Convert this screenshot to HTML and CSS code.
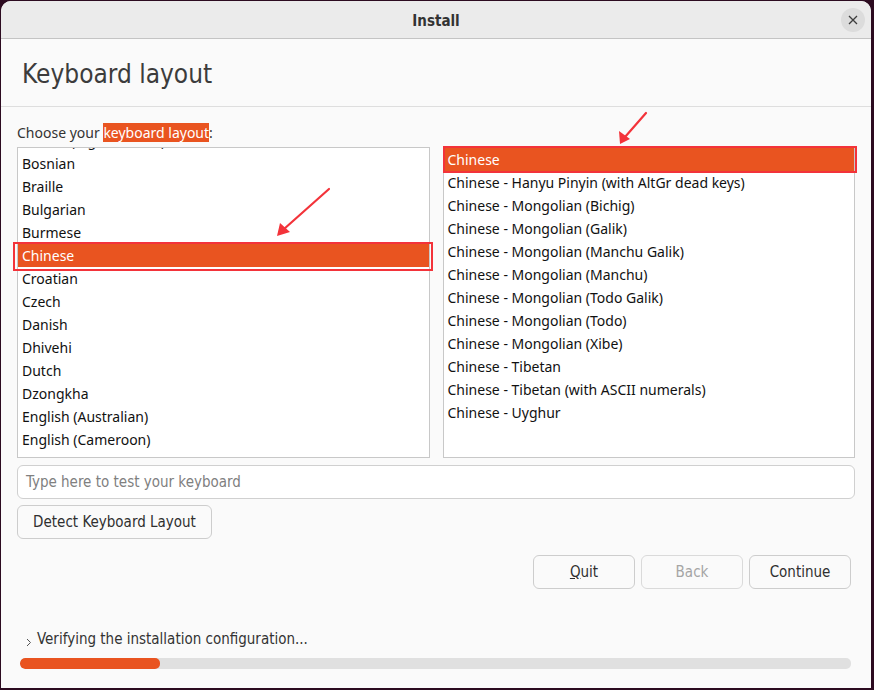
FILE: index.html
```html
<!DOCTYPE html>
<html>
<head>
<meta charset="utf-8">
<link rel="stylesheet" href="styles.css">
</head>
<body>
<div class="window">
  <header class="titlebar">
    <span class="title">Install</span>
    <span class="close">
      <svg width="10" height="10" viewBox="0 0 10 10"><path d="M1 1 L9 9 M9 1 L1 9" stroke="#3d3d3d" stroke-width="1.3" fill="none"/></svg>
    </span>
  </header>
  <div class="page-head">
    <h1 class="heading">Keyboard layout</h1>
  </div>
  <main class="body">
    <div class="label">Choose your <span class="hl">keyboard layout</span>:</div>
    <div class="lists">
      <div class="list">
        <div class="rows shifted">
          <div class="row">Berber (Algeria, Latin)</div>
          <div class="row">Bosnian</div>
          <div class="row">Braille</div>
          <div class="row">Bulgarian</div>
          <div class="row">Burmese</div>
          <div class="row sel">Chinese</div>
          <div class="row">Croatian</div>
          <div class="row">Czech</div>
          <div class="row">Danish</div>
          <div class="row">Dhivehi</div>
          <div class="row">Dutch</div>
          <div class="row">Dzongkha</div>
          <div class="row">English (Australian)</div>
          <div class="row">English (Cameroon)</div>
          <div class="row">English (Ghana)</div>
        </div>
      </div>
      <div class="list">
        <div class="rows">
          <div class="row sel">Chinese</div>
          <div class="row">Chinese - Hanyu Pinyin (with AltGr dead keys)</div>
          <div class="row">Chinese - Mongolian (Bichig)</div>
          <div class="row">Chinese - Mongolian (Galik)</div>
          <div class="row">Chinese - Mongolian (Manchu Galik)</div>
          <div class="row">Chinese - Mongolian (Manchu)</div>
          <div class="row">Chinese - Mongolian (Todo Galik)</div>
          <div class="row">Chinese - Mongolian (Todo)</div>
          <div class="row">Chinese - Mongolian (Xibe)</div>
          <div class="row">Chinese - Tibetan</div>
          <div class="row">Chinese - Tibetan (with ASCII numerals)</div>
          <div class="row">Chinese - Uyghur</div>
        </div>
      </div>
    </div>
    <div class="test-input">Type here to test your keyboard</div>
    <div class="detect-row"><button class="btn detect">Detect Keyboard Layout</button></div>
    <div class="actions">
      <button class="btn act"><u>Q</u>uit</button>
      <button class="btn act disabled">Back</button>
      <button class="btn act">Continue</button>
    </div>
    <div class="spacer"></div>
    <div class="status">
      <svg class="chev" width="6" height="9" viewBox="0 0 6 9"><path d="M1 1 L4.5 4.5 L1 8" stroke="#555" stroke-width="1" fill="none"/></svg>
      <span>Verifying the installation configuration...</span>
    </div>
    <div class="progress"><div class="fill" style="width:140px"></div></div>
  </main>
</div>
<div class="mark mark-left"></div>
<div class="mark mark-right"></div>
<svg class="arrows" width="874" height="690" viewBox="0 0 874 690">
  <g stroke="#f3333a" stroke-width="2.2" stroke-linecap="round">
    <line x1="329" y1="189" x2="284" y2="229"/>
    <line x1="646" y1="113" x2="625" y2="137"/>
  </g>
  <g fill="#f3333a">
    <polygon points="277,236 280,223 290,232"/>
    <polygon points="620,144 619,131 630,139"/>
  </g>
</svg>
</body>
</html>
```

FILE: styles.css
```css
* { box-sizing: border-box; }
html, body { margin: 0; height: 100%; }
body {
  background: #2c0b20;
  padding: 1px 3px 2px 1px;
  font-family: "Noto Sans", "DejaVu Sans", sans-serif;
  position: relative;
  overflow: hidden;
}
.window {
  height: 687px;
  background: #fafafa;
  border-radius: 10px 10px 0 0;
  display: flex;
  flex-direction: column;
  overflow: hidden;
}
.titlebar {
  height: 38px;
  flex: none;
  background: #ebebeb;
  border-bottom: 1px solid #c4c4c4;
  display: flex;
  align-items: center;
  justify-content: center;
  position: relative;
}
.title {
  font-family: "Liberation Sans Narrow", "DejaVu Sans Condensed", sans-serif;
  font-weight: bold;
  font-size: 15px;
  color: #333;
  padding-top: 2px;
}
.close {
  position: absolute;
  right: 6px;
  top: 7px;
  width: 24px;
  height: 24px;
  border-radius: 50%;
  background: #dcdcdc;
  display: flex;
  align-items: center;
  justify-content: center;
}
.page-head {
  height: 68px;
  flex: none;
  border-bottom: 1px solid #dedede;
  padding: 20px 0 0 21px;
}
.heading {
  margin: 0;
  font-family: "Liberation Sans Narrow", "DejaVu Sans Condensed", sans-serif;
  font-weight: normal;
  font-size: 26px;
  color: #3c3c3c;
}
.body {
  flex: 1;
  display: flex;
  flex-direction: column;
  padding: 17px 16px 19px 16px;
}
.label {
  font-size: 14px;
  color: #333;
  line-height: 18px;
  height: 23px;
}
.hl { background: #e95420; color: #fff; }
.lists {
  display: flex;
  gap: 13px;
  height: 311px;
}
.list {
  flex: 1;
  background: #fff;
  border: 1px solid #c8c8c8;
  overflow: hidden;
}
.rows.shifted { margin-top: -19px; }
.row {
  height: 23px;
  line-height: 23px;
  padding-left: 4px;
  font-size: 14px;
  color: #111;
  white-space: nowrap;
}
.row.sel { background: #e95420; color: #fff; }
.test-input {
  margin-top: 7px;
  height: 34px;
  border: 1px solid #d0d0d0;
  border-radius: 6px;
  background: #fff;
  padding-left: 8px;
  line-height: 32px;
  font-family: "Liberation Sans Narrow", "DejaVu Sans Condensed", sans-serif;
  font-size: 15px;
  color: #808080;
}
.detect-row { margin-top: 6px; display: flex; }
.btn {
  height: 34px;
  border: 1px solid #cdcdcd;
  border-radius: 6px;
  background: #fafafa;
  font-family: "Liberation Sans Narrow", "DejaVu Sans Condensed", sans-serif;
  font-size: 15px;
  color: #2f2f2f;
  padding: 0;
}
.detect { width: 195px; }
.actions {
  margin-top: 16px;
  display: flex;
  justify-content: flex-end;
  gap: 6px;
  padding-right: 4px;
}
.act { width: 102px; }
.act.disabled { color: #a5a5a5; border-color: #dadada; }
.spacer { flex: 1; }
.status {
  display: flex;
  align-items: center;
  gap: 5px;
  padding-left: 9px;
  height: 20px;
  font-family: "Liberation Sans Narrow", "DejaVu Sans Condensed", sans-serif;
  font-size: 15px;
  color: #333;
}
.chev { margin-top: 6px; }
.progress {
  margin: 9px 4px 0 3px;
  height: 11px;
  border-radius: 5px;
  background: #e0e0e0;
  overflow: hidden;
}
.fill { height: 100%; background: #e95420; border-radius: 5px; }
.mark {
  position: absolute;
  border: 2px solid #f3333a;
}
.mark-left { left: 13px; top: 242px; width: 420px; height: 29px; }
.mark-right { left: 443px; top: 146px; width: 414px; height: 27px; }
.arrows { position: absolute; left: 0; top: 0; pointer-events: none; }
```
